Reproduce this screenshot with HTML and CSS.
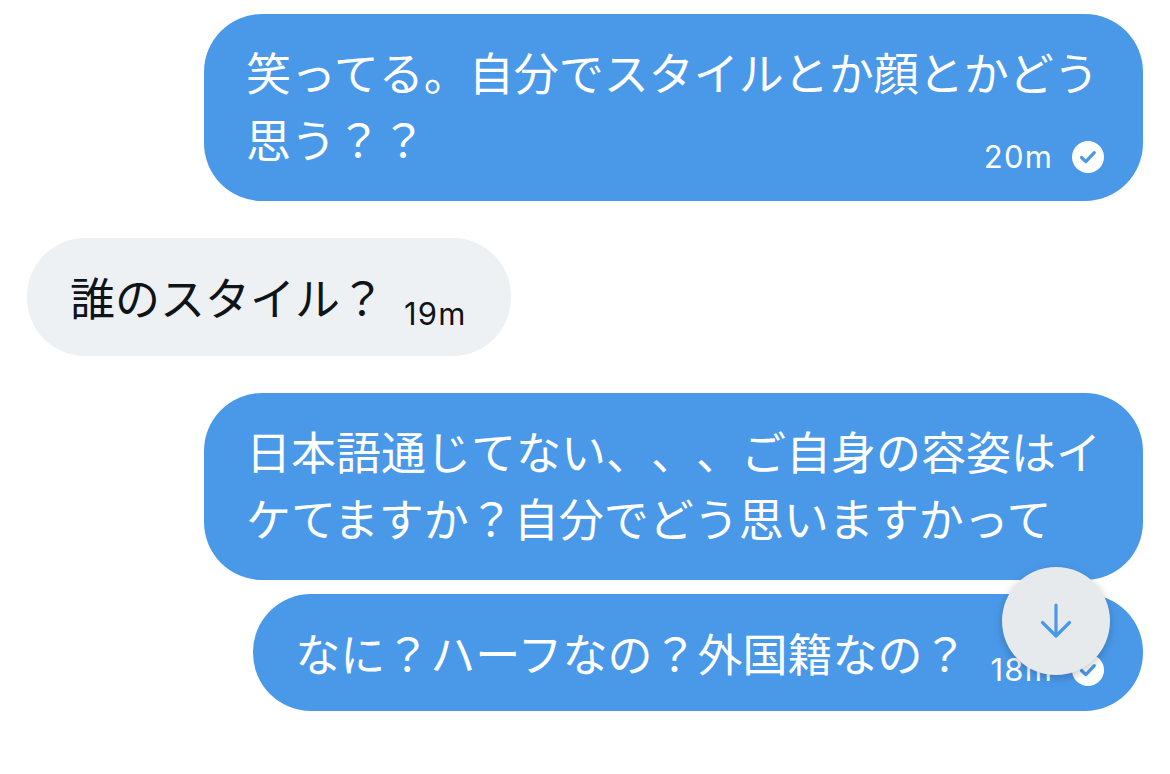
FILE: index.html
```html
<!DOCTYPE html>
<html lang="ja">
<head>
<meta charset="utf-8">
<link rel="stylesheet" href="styles.css">
</head>
<body>
<main class="thread">
  <div class="msg sent">
    <div class="bubble blue multi">
      <span class="text">笑ってる。自分でスタイルとか顔とかどう思う？？</span>
      <div class="meta-row">
        <span class="meta"><span class="time">20m</span><svg class="check" viewBox="0 0 32 32" width="32" height="32"><circle cx="16" cy="16" r="16" fill="#fff"/><path d="M9.5 16.5 L13.8 20.6 L22.3 11.6" fill="none" stroke="#4a99e9" stroke-width="3.2" stroke-linecap="round" stroke-linejoin="round"/></svg></span>
      </div>
    </div>
  </div>

  <div class="msg received">
    <div class="bubble grey"><span class="text">誰のスタイル？</span><span class="meta"><span class="time">19m</span></span></div>
  </div>

  <div class="msg sent">
    <div class="bubble blue plain">
      <span class="text">日本語通じてない、、、ご自身の容姿はイケてますか？自分でどう思いますかって</span>
    </div>
  </div>

  <div class="msg sent tight">
    <div class="bubble blue single"><span class="text">なに？ハーフなの？外国籍なの？</span><span class="meta"><span class="time">18m</span><svg class="check" viewBox="0 0 32 32" width="32" height="32"><circle cx="16" cy="16" r="16" fill="#fff"/><path d="M9.5 16.5 L13.8 20.6 L22.3 11.6" fill="none" stroke="#4a99e9" stroke-width="3.2" stroke-linecap="round" stroke-linejoin="round"/></svg></span></div>
  </div>

  <button class="scroll-down" aria-label="Scroll to bottom">
    <svg viewBox="0 0 40 40" width="40" height="40"><path d="M20 4 V35 M6.5 21.5 L20 35 L33.5 21.5" fill="none" stroke="#4a99e9" stroke-width="3.2" stroke-linecap="round" stroke-linejoin="round"/></svg>
  </button>
</main>
</body>
</html>
```
FILE: styles.css
```css
html, body {
  margin: 0;
  padding: 0;
  background: #ffffff;
}

body {
  font-family: "Noto Sans CJK JP", "Noto Sans", sans-serif;
  width: 1170px;
  height: 774px;
  overflow: hidden;
}

.thread {
  position: relative;
  display: flex;
  flex-direction: column;
  padding: 14px 27px 0 27px;
  gap: 37px;
}

.msg {
  display: flex;
}

.msg.sent {
  justify-content: flex-end;
}

.msg.received {
  justify-content: flex-start;
}

.msg.tight {
  margin-top: -23px;
}

.bubble {
  box-sizing: border-box;
  border-radius: 58px;
  font-size: 45px;
  line-height: 67px;
  padding: 25px 39px 25px 42px;
  text-spacing-trim: space-all;
  font-feature-settings: normal;
}

.bubble.blue {
  background: #4a99e9;
  color: #ffffff;
  max-width: 939px;
  width: max-content;
}

.bubble.multi,
.bubble.plain {
  width: 939px;
  padding-top: 24px;
}

.bubble.multi {
  padding-bottom: 28px;
}

.bubble.plain {
  padding-bottom: 29px;
}

.bubble.single {
  padding: 25px 39px 25px 42px;
}

.bubble.grey {
  background: #eef1f3;
  color: #0f1419;
  padding: 25px 44px 26px 43px;
}

.meta-row {
  display: flex;
  justify-content: flex-end;
  margin-top: -31px;
  height: 32px;
}

.meta {
  display: inline-flex;
  align-items: center;
  gap: 19px;
  font-family: Inter, "Liberation Sans", sans-serif;
  font-size: 31px;
  line-height: 32px;
  height: 32px;
}

.time {
  letter-spacing: 1.2px;
}

.bubble.single .meta,
.bubble.grey .meta {
  margin-left: 23px;
  vertical-align: -9px;
}

.bubble.grey .meta {
  margin-left: 19px;
}

.check {
  display: block;
  flex: none;
}

.scroll-down {
  position: absolute;
  left: 1002px;
  top: 567px;
  width: 108px;
  height: 108px;
  border: none;
  border-radius: 50%;
  background: #e7eaed;
  box-shadow: 0 3px 10px rgba(0, 0, 0, 0.22);
  display: flex;
  align-items: center;
  justify-content: center;
  padding: 0;
}

.scroll-down svg {
  display: block;
}
```
